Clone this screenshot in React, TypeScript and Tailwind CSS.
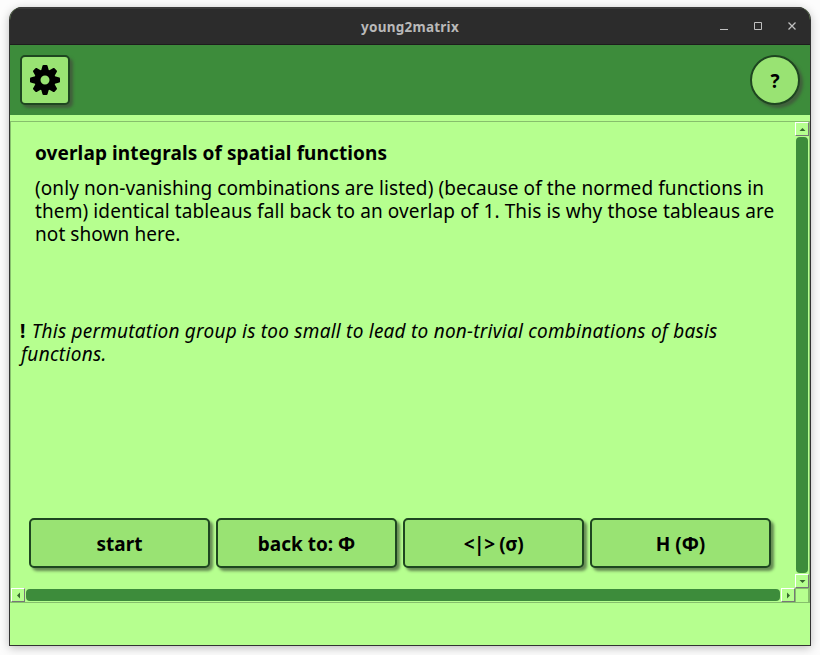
import React from "react";

const actionButtons = [
  { label: "start", tracking: "tracking-[0.05px]" },
  { label: "back to: Φ", tracking: "tracking-[0px]" },
  { label: "<|> (σ)", tracking: "tracking-[-0.4px]" },
  { label: "H (Φ)", tracking: "tracking-[0px]" },
];

function Arrow({ points }: { points: string }) {
  return (
    <svg className="block size-[7px]" viewBox="0 0 7 7">
      <polygon points={points} fill="#37682f" />
    </svg>
  );
}

function ScrollButton({ points }: { points: string }) {
  return (
    <div className="flex h-[14px] w-[14px] shrink-0 items-center justify-center border border-t-white border-r-[#777] border-b-[#777] border-l-white bg-[#b6ff8f]">
      <Arrow points={points} />
    </div>
  );
}

export default function App() {
  return (
    <div className="h-[655px] w-[820px] overflow-hidden bg-[#fcfcfc] pt-[7px] pl-[9px] font-['Noto_Sans',sans-serif] text-black">
      <div className="flex h-[639px] w-[802px] flex-col overflow-hidden rounded-t-[13px] border border-t-0 border-[#333] bg-[#b6ff8f] shadow-[0_2px_10px_rgba(0,0,0,0.25)]">
        <div className="grid h-[38px] shrink-0 grid-cols-[1fr_auto_1fr] items-center border-t-2 border-b border-t-[#3b3b3b] border-b-[#1d1d1d] bg-[#2c2c2c]">
          <span />
          <span className="pt-[2px] text-[13.5px] leading-none font-bold tracking-[0.25px] text-[#b9b9b9]">young2matrix</span>
          <svg className="mr-[12px] ml-auto block h-[12px] w-[80px]" viewBox="0 0 80 12" fill="none" stroke="#c0c0c0">
            <path d="M2 8.500h8M36.500 1.500h7v7h-7z" />
            <path d="M70.500 1.500l7 7M77.500 1.500l-7 7" strokeWidth="1.300" />
          </svg>
        </div>
        <div className="flex h-[70px] shrink-0 items-center justify-between bg-[#3d8c3b] px-[10px]">
          <button className="flex size-[50px] items-center justify-center rounded-[5px] border-2 border-[#1e4620] bg-[#99e373] shadow-[3px_3px_3px_#41603c]">
            <svg className="size-[30px]" viewBox="-15 -15 30 30">
              <path fillRule="evenodd" d="M-10.500 0a10.500 10.500 0 1 0 21 0a10.500 10.500 0 1 0-21 0M-4.500 0a4.500 4.500 0 1 0 9 0a4.500 4.500 0 1 0-9 0" />
              {[0, 45, 90, 135, 180, 225, 270, 315].map((a) => (
                <path key={a} transform={`rotate(${a})`} d="M-4-9L-2.500-14.300Q-2.300-15-1.500-15H1.500Q2.300-15 2.500-14.300L4-9z" />
              ))}
            </svg>
          </button>
          <button className="flex size-[50px] items-center justify-center rounded-full border-2 border-[#1e4620] bg-[#99e373] pt-[2px] text-[19px] font-bold shadow-[3px_3px_3px_#41603c]">
            ?
          </button>
        </div>
        <main className="mt-[6px] grid h-[482px] shrink-0 grid-cols-[1fr_14px] grid-rows-[1fr_14px] border border-[#86bf6c]">
          <section className="flex flex-col pt-[20px] pl-[9px] text-[19px] leading-[23px] whitespace-nowrap">
            <h1 className="ml-[15px] font-bold tracking-[0.11px]">overlap integrals of spatial functions</h1>
            <p className="mt-[12px] ml-[15px] flex flex-col items-start">
              <span className="tracking-[0.085px]">(only non-vanishing combinations are listed) (because of the normed functions in</span>
              <span className="tracking-[0.105px]">them) identical tableaus fall back to an overlap of 1. This is why those tableaus are</span>
              <span className="tracking-[0.08px]">not shown here.</span>
            </p>
            <p className="mt-[74px] flex flex-col items-start italic">
              <span className="tracking-[0.23px]">
                <b className="mr-px not-italic">!</b> This permutation group is too small to lead to non-trivial combinations of basis
              </span>
              <span className="ml-px tracking-[0.3px]">functions.</span>
            </p>
            <div className="mt-[152px] ml-[9px] flex gap-[6px]">
              {actionButtons.map(({ label, tracking }) => (
                <button
                  key={label}
                  className={`flex h-[50px] w-[181px] shrink-0 items-center justify-center rounded-[5px] border-2 border-[#1e4620] bg-[#99e373] pt-[2px] font-bold shadow-[3px_3px_3px_#658b53] ${tracking}`}
                >
                  {label}
                </button>
              ))}
            </div>
          </section>
          <div className="flex flex-col items-center justify-between">
            <ScrollButton points="0.500,5 3.500,2 6.500,5" />
            <div className="h-[436px] w-[12px] rounded-[4px] bg-[#3d8c3b]" />
            <ScrollButton points="0.500,2 3.500,5 6.500,2" />
          </div>
          <div className="flex items-center justify-between">
            <ScrollButton points="5,0.500 2,3.500 5,6.500" />
            <div className="h-[12px] w-[754px] rounded-[4px] bg-[#3d8c3b]" />
            <ScrollButton points="2,0.500 5,3.500 2,6.500" />
          </div>
          <div className="border border-b-0 border-[#86bf6c]" />
        </main>
      </div>
    </div>
  );
}
